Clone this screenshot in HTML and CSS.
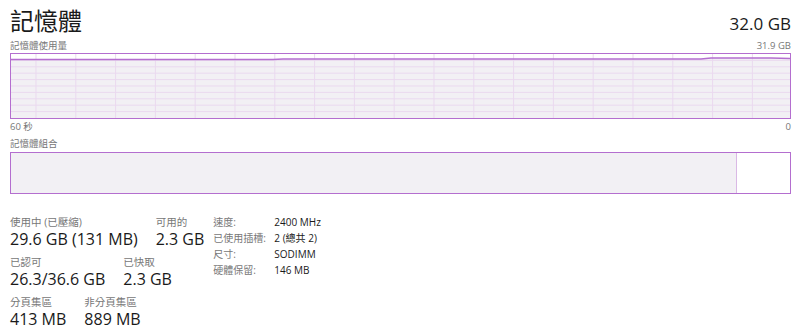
FILE: index.html
```html
<!DOCTYPE html>
<html lang="zh-Hant">
<head>
<meta charset="UTF-8" />
<title>記憶體</title>
<link rel="stylesheet" href="styles.css">
</head>
<body>

<div id="memory">
  <div class="header">
    <span class="title">記憶體</span>
    <span class="total">32.0 GB</span>
  </div>

  <div class="caption">
    <span>記憶體使用量</span>
    <span>31.9 GB</span>
  </div>
  <div class="chart">
    <svg viewBox="0 0 779 64" preserveAspectRatio="none">
      <polygon class="area" points="0,5.5 262,5.5 272,5 690,5 700,4 760,4 779,4.5 779,64 0,64" />
      <g class="grid">
        <line x1="0" y1="6.4" x2="779" y2="6.4" />
        <line x1="0" y1="12.8" x2="779" y2="12.8" />
        <line x1="0" y1="19.2" x2="779" y2="19.2" />
        <line x1="0" y1="25.6" x2="779" y2="25.6" />
        <line x1="0" y1="32" x2="779" y2="32" />
        <line x1="0" y1="38.4" x2="779" y2="38.4" />
        <line x1="0" y1="44.8" x2="779" y2="44.8" />
        <line x1="0" y1="51.2" x2="779" y2="51.2" />
        <line x1="0" y1="57.6" x2="779" y2="57.6" />
      </g>
      <g class="grid" id="vgrid"></g>
      <polyline class="usage" points="0,5.5 262,5.5 272,5 690,5 700,4 760,4 779,4.5" />
    </svg>
  </div>
  <div class="caption axis">
    <span>60 秒</span>
    <span>0</span>
  </div>

  <div class="caption">
    <span>記憶體組合</span>
  </div>
  <div class="composition">
    <div class="in-use"></div>
    <div class="free"></div>
  </div>

  <div class="stats">
    <div class="main-stats">
      <div class="row">
        <div class="stat">
          <div class="label">使用中 (已壓縮)</div>
          <div class="value">29.6 GB (131 MB)</div>
        </div>
        <div class="stat">
          <div class="label">可用的</div>
          <div class="value">2.3 GB</div>
        </div>
      </div>
      <div class="row">
        <div class="stat">
          <div class="label">已認可</div>
          <div class="value">26.3/36.6 GB</div>
        </div>
        <div class="stat">
          <div class="label">已快取</div>
          <div class="value">2.3 GB</div>
        </div>
      </div>
      <div class="row">
        <div class="stat">
          <div class="label">分頁集區</div>
          <div class="value">413 MB</div>
        </div>
        <div class="stat">
          <div class="label">非分頁集區</div>
          <div class="value">889 MB</div>
        </div>
      </div>
    </div>

    <table class="details">
      <tr><td>速度:</td><td>2400 MHz</td></tr>
      <tr><td>已使用插槽:</td><td>2 (總共 2)</td></tr>
      <tr><td>尺寸:</td><td>SODIMM</td></tr>
      <tr><td>硬體保留:</td><td>146 MB</td></tr>
    </table>
  </div>
</div>

<script>
  const vgrid = document.getElementById('vgrid');
  for (let x = 25; x < 779; x += 39.8) {
    const line = document.createElementNS('http://www.w3.org/2000/svg', 'line');
    line.setAttribute('x1', x);
    line.setAttribute('x2', x);
    line.setAttribute('y1', 0);
    line.setAttribute('y2', 64);
    vgrid.appendChild(line);
  }
</script>

</body>
</html>
```

FILE: styles.css
```css
/* Task manager - memory page */
body {
  margin: 0;
  background: white;
  font-family: 'Open Sans', 'Noto Sans CJK TC', sans-serif;
  color: #1a1a1a;
}
#memory {
  padding: 4px 9px 0 10px;
}
.header {
  display: flex;
  justify-content: space-between;
  align-items: baseline;
  height: 34px;
}
.title {
  font-family: 'Noto Sans CJK TC', sans-serif;
  font-size: 24px;
  line-height: 32px;
}
.total {
  font-size: 17px;
  line-height: 32px;
}
.caption {
  display: flex;
  justify-content: space-between;
  font-size: 9.5px;
  line-height: 15px;
  color: #777;
}
.caption.axis {
  margin-bottom: 2px;
}
.chart {
  height: 64px;
  border: 1px solid #b46ecf;
  background: white;
}
.chart svg {
  display: block;
  width: 100%;
  height: 100%;
}
.area {
  fill: #f2f0f4;
}
.grid line {
  stroke: #ead9ef;
  stroke-width: 1;
}
.usage {
  fill: none;
  stroke: #b46ecf;
  stroke-width: 1.5;
}
.composition {
  display: flex;
  height: 40px;
  border: 1px solid #b46ecf;
  margin-top: 1px;
}
.in-use {
  width: 725px;
  background: #f2f0f4;
  border-right: 1px solid #dab9e5;
}
.free {
  flex: 1;
}
.stats {
  display: flex;
  gap: 9px;
  margin-top: 22px;
}
.row {
  display: flex;
  gap: 18px;
  margin-bottom: 5px;
}
.label {
  font-size: 10.5px;
  line-height: 12px;
  color: #777;
}
.value {
  font-size: 16px;
  line-height: 23px;
}
.details {
  border-collapse: collapse;
  font-size: 10px;
  align-self: flex-start;
  margin-top: -2px;
}
.details td {
  padding: 0;
  height: 16px;
  line-height: 16px;
}
.details td:first-child {
  color: #777;
  width: 61px;
}
```
